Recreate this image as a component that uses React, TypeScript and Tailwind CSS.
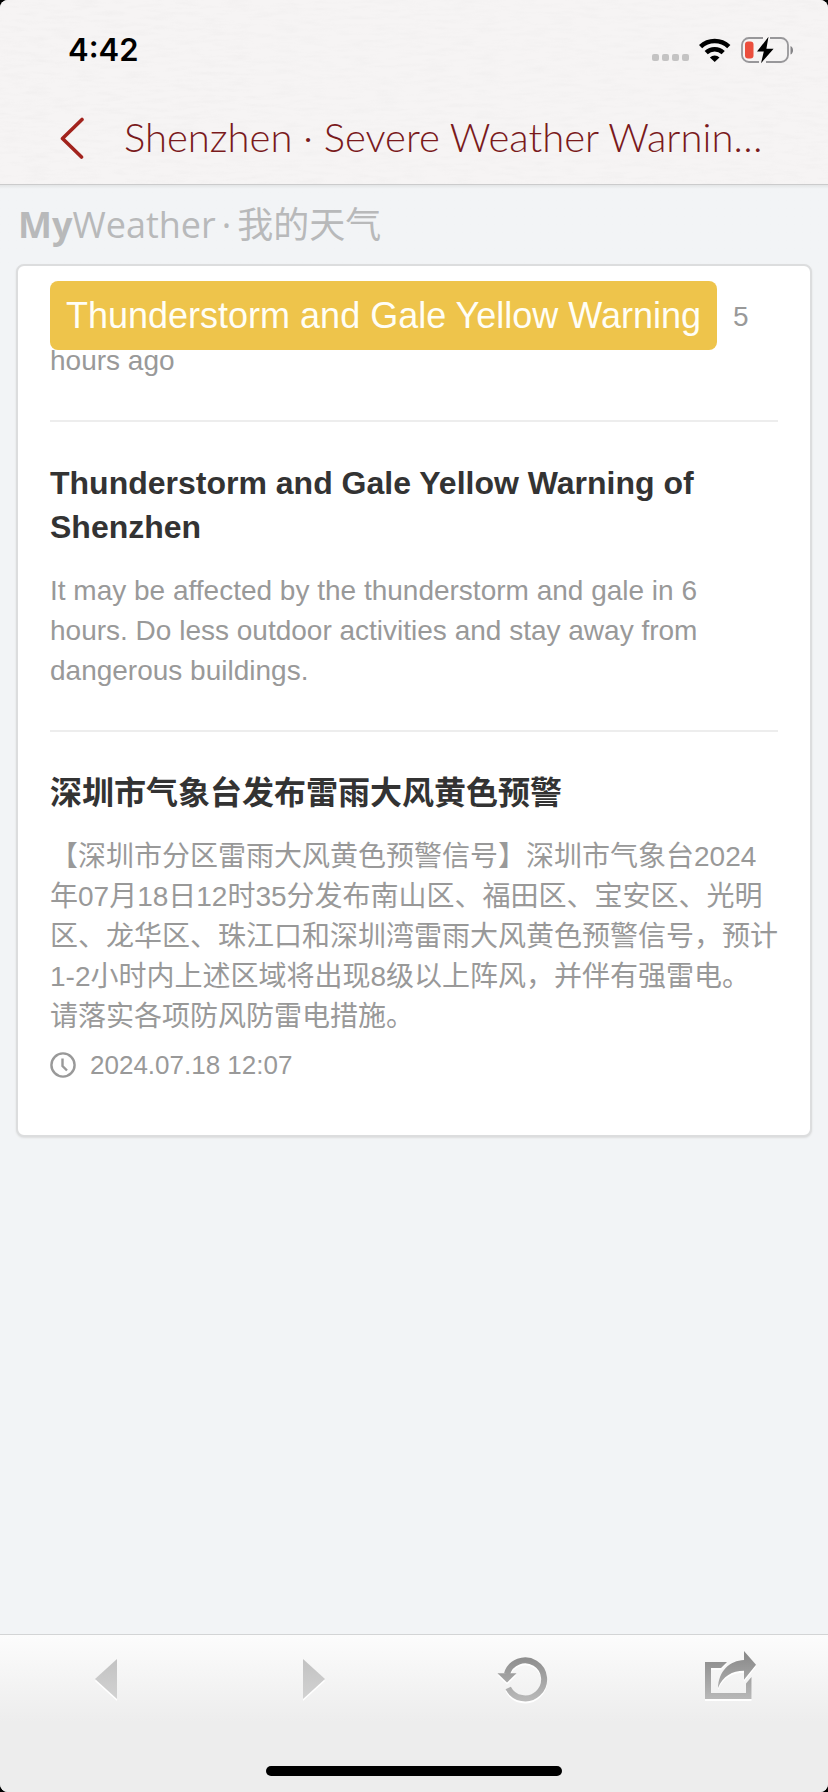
import type { ReactNode } from "react";

const SANS = "font-['Liberation_Sans','Noto_Sans_CJK_SC',sans-serif]";

function StatusBar() {
  return (
    <div className="relative flex h-24 items-center justify-between pt-[3px] pl-[68px] pr-[34px]">
      <span className="font-['Inter','Liberation_Sans',sans-serif] text-[31px] leading-10 font-semibold text-black">4:42</span>
      <div className="flex items-center">
        <svg width="38" height="24" viewBox="0 0 38 24" fill="#c4c3c3" aria-hidden="true">
          <rect x="0" y="16" width="7" height="7" rx="2" />
          <rect x="10" y="16" width="7" height="7" rx="2" />
          <rect x="20" y="16" width="7" height="7" rx="2" />
          <rect x="30" y="16" width="7" height="7" rx="2" />
        </svg>
        <svg className="ml-2" width="34" height="26" viewBox="0 0 34 26" fill="none" stroke="#000" strokeWidth="4.6" aria-hidden="true">
          <path d="M2.6 9.6a20.4 20.4 0 0 1 28.2 0" />
          <path d="M8.2 15.6a12.4 12.4 0 0 1 17 0" />
          <path d="M11.9 20.4a7 7 0 0 1 9.6 0L16.7 25z" fill="#000" stroke="none" />
        </svg>
        <svg className="ml-2" width="54" height="28" viewBox="0 0 54 28" aria-hidden="true">
          <path d="M23 2H9a7 7 0 0 0-7 7v10a7 7 0 0 0 7 7h10M30 2h11a7 7 0 0 1 7 7v10a7 7 0 0 1-7 7H26" fill="none" stroke="#98979a" strokeWidth="1.8" />
          <path d="M50.5 10c3.4 1.4 3.4 7.200 0 8.600z" fill="#858487" />
          <rect x="5" y="5.500" width="8.500" height="17" rx="3" fill="#eb4e3d" />
          <path d="M28.500 0.800 17 15.600h6.800L21 27.200 33.600 12.800h-7.200z" fill="#000" />
        </svg>
      </div>
    </div>
  );
}

function Header() {
  return (
    <header className="relative overflow-hidden border-b border-[#cbcbcc] bg-[#f6f4f4]">
      {/* paper grain */}
      <svg className="absolute inset-0 h-full w-full opacity-10" aria-hidden="true">
        <filter id="grain">
          <feTurbulence type="fractalNoise" baseFrequency="0.04 0.25" numOctaves="3" seed="4" />
          <feColorMatrix values="0 0 0 0 0.5  0 0 0 0 0.5  0 0 0 0 0.5  1.200 0 0 0 -0.500" />
        </filter>
        <rect width="100%" height="100%" filter="url(#grain)" />
      </svg>
      <StatusBar />
      <div className="relative flex h-[88px] items-center pr-12 pb-[2px] pl-[58px]">
        <button type="button" aria-label="Back" className="shrink-0">
          <svg width="28" height="44" viewBox="0 0 28 44" fill="none" stroke="#a2231d" strokeWidth="3.6" strokeLinecap="round" strokeLinejoin="round">
            <path d="M24 2.500 4.500 21.500 23.500 40" />
          </svg>
        </button>
        <h1 className="ml-[38px] min-w-0 flex-1 pb-1 whitespace-nowrap font-['Lato','Liberation_Sans',sans-serif] text-[40px] leading-[48px] font-light text-[#7a1a1c]">
          Shenzhen · Severe Weather Warnin…
        </h1>
      </div>
    </header>
  );
}

function Logo() {
  return (
    <div className="flex h-[79px] items-center bg-linear-to-b from-[#e3e5e6] to-[#f2f4f6] to-5% px-[18px] font-['Open_Sans','Noto_Sans_CJK_SC',sans-serif] text-[36px] text-[#b8b9ba]">
      <span className="font-bold">My</span>
      <span>Weather</span>
      <span className="mx-[6px]">·</span>
      <span lang="zh-CN">我的天气</span>
    </div>
  );
}

function ClockIcon() {
  return (
    <svg width="26" height="26" viewBox="0 0 26 26" fill="none" stroke="#999" strokeWidth="2.400" aria-hidden="true">
      <circle cx="13" cy="13" r="11.600" />
      <path d="M12.500 6.500V14l4.500 4.500" />
    </svg>
  );
}

function ToolButton({ label, children }: { label: string; children: ReactNode }) {
  return (
    <button type="button" aria-label={label} className="flex justify-center">
      <svg width="57" height="56" viewBox="0 0 57 56" className="overflow-visible drop-shadow-[0_2px_0_#ffffff]">
        {children}
      </svg>
    </button>
  );
}

function Toolbar() {
  return (
    <footer className="border-t border-[#d3d4d5] bg-[#ededed]">
      <div className="grid h-[87px] grid-cols-4 bg-linear-to-b from-[#fcfcfc] to-[#ededed] pt-[15px]">
        <ToolButton label="Previous page">
          <defs>
            <linearGradient id="pale" gradientUnits="userSpaceOnUse" x1="0" y1="9" x2="0" y2="49">
              <stop stopColor="#c2c2c2" />
              <stop offset="1" stopColor="#d2d2d2" />
            </linearGradient>
            <linearGradient id="dark" gradientUnits="userSpaceOnUse" x1="0" y1="5" x2="0" y2="50">
              <stop stopColor="#8b8b8b" />
              <stop offset="1" stopColor="#b9b9b9" />
            </linearGradient>
          </defs>
          <path d="M42 9 20 29l22 20z" fill="url(#pale)" />
        </ToolButton>
        <ToolButton label="Next page">
          <path d="M21 9l22 20-22 20z" fill="url(#pale)" />
        </ToolButton>
        <ToolButton label="Reload">
          <path d="M17.900 24A19 19 0 1 1 19.200 38" fill="none" stroke="url(#dark)" strokeWidth="6" />
          <path d="M8.500 23.300h19L18 32.500z" fill="url(#dark)" />
        </ToolButton>
        <ToolButton label="Share">
          <path d="M9 12h22l-6 6H15v25h35v-9.500l5.500-6.500v22H9z" fill="url(#dark)" />
          <path d="M48 1l12 13.700-12 15v-9C36 20.700 27 26 22 38 22.500 21 34 10.500 48 10z" fill="url(#dark)" />
        </ToolButton>
      </div>
      <div className="flex h-[70px] justify-center pt-[44px]">
        <div className="h-[10px] w-[296px] rounded-full bg-black" />
      </div>
    </footer>
  );
}

export default function App() {
  return (
    <div className="min-h-screen bg-black">
      <div className={`flex min-h-screen flex-col overflow-hidden rounded-lg bg-[#f2f4f6] ${SANS}`}>
        <Header />
        <main className="flex-1">
          <Logo />
          <article className="mx-4 rounded-lg border-2 border-[#dcddde] bg-white px-8 pb-[50px] shadow-[0_1px_2px_#dcddde]">
            <div className="border-b-2 border-[#ededed] pt-[29px] pb-[37px] text-[28px] leading-[44px] text-[#999]">
              <span className="mr-4 rounded-lg bg-[#eec44b] px-4 py-[14px] align-text-bottom text-[36px] leading-8 text-[#fffef6]">
                Thunderstorm and Gale Yellow Warning
              </span>
              5 hours ago
            </div>

            <section className="border-b-2 border-[#ededed] pt-[39px] pb-[39px]">
              <h2 className="text-[32px] leading-[44px] font-bold text-[#333]">
                Thunderstorm and Gale Yellow Warning of Shenzhen
              </h2>
              <p className="mt-[22px] text-[28px] leading-10 text-[#999]">
                It may be affected by the thunderstorm and gale in 6 hours. Do less outdoor activities and stay away from dangerous buildings.
              </p>
            </section>

            <section className="pt-[39px]" lang="zh-CN">
              <h2 className="text-[32px] leading-[44px] font-bold text-[#333]">深圳市气象台发布雷雨大风黄色预警</h2>
              <p className="mt-[22px] text-[28px] leading-10 text-[#999]">
                【深圳市分区雷雨大风黄色预警信号】深圳市气象台2024年07月18日12时35分发布南山区、福田区、宝安区、光明区、龙华区、珠江口和深圳湾雷雨大风黄色预警信号，预计1-2小时内上述区域将出现8级以上阵风，并伴有强雷电。请落实各项防风防雷电措施。
              </p>
              <div className="mt-2 flex items-center gap-[14px] text-[26px] leading-10 text-[#999]">
                <ClockIcon />
                <time dateTime="2024-07-18T12:07">2024.07.18 12:07</time>
              </div>
            </section>
          </article>
        </main>
        <Toolbar />
      </div>
    </div>
  );
}
